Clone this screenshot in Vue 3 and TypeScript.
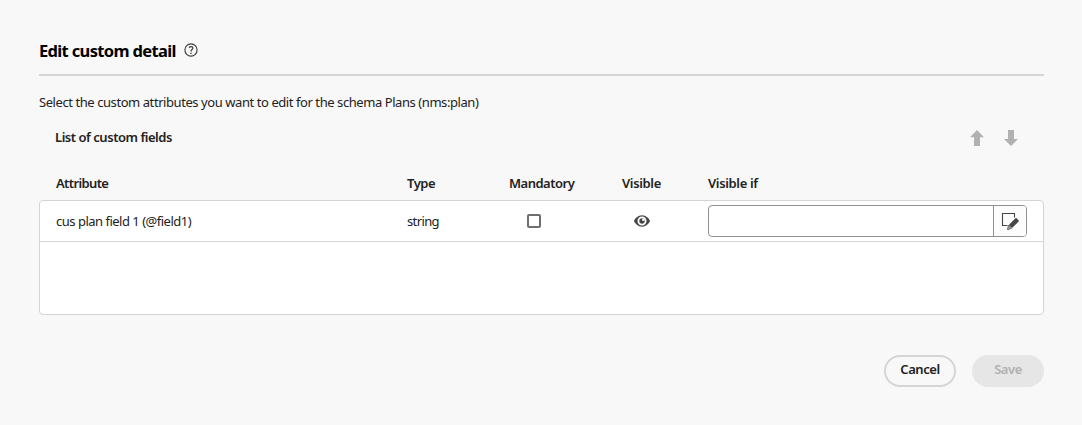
<script setup lang="ts">
import { ref } from 'vue'

interface Field {
  label: string
  type: string
  mandatory: boolean
  visibleIf: string
}

const fields = ref<Field[]>([
  { label: 'cus plan field 1 (@field1)', type: 'string', mandatory: false, visibleIf: '' },
])
</script>

<template>
  <main class="dialog">
    <header class="head">
      <h1>Edit custom detail</h1>
      <svg class="help" viewBox="0 0 14 14" width="14" height="14">
        <circle cx="7" cy="7" r="6.1" fill="none" stroke="#3c3c3c" stroke-width="1.15" />
        <path d="M5.1 4.7C5.7 3.2 8.9 3.2 8.9 5.1C8.9 6.6 7 6.5 7 8.4" fill="none" stroke="#3c3c3c" stroke-width="1.2" />
        <circle cx="7" cy="10.3" r=".8" fill="#3c3c3c" />
      </svg>
    </header>
    <p class="intro">Select the custom attributes you want to edit for the schema Plans (nms:plan)</p>
    <div class="toolbar">
      <h2>List of custom fields</h2>
      <div class="arrows">
        <svg viewBox="0 0 14 16" width="14" height="16"><path d="M7 0L14 7.2H10V16H4V7.2H0Z" fill="#b1b1b1" /></svg>
        <svg viewBox="0 0 14 16" width="14" height="16"><path d="M7 16L0 9H4V0H10V9H14Z" fill="#b1b1b1" /></svg>
      </div>
    </div>
    <div class="row columns">
      <b class="tight">Attribute</b>
      <b>Type</b>
      <b>Mandatory</b>
      <b class="visible">Visible</b>
      <b class="condition-title">Visible if</b>
    </div>
    <section class="table">
      <div v-for="field in fields" :key="field.label" class="row record">
        <span>{{ field.label }}</span>
        <span class="tight">{{ field.type }}</span>
        <input v-model="field.mandatory" class="check" type="checkbox" />
        <svg class="eye" viewBox="0 0 16 12" width="16" height="12">
          <path fill-rule="evenodd" d="M8 .3C4 .3 .9 3.6 0 6C.9 8.4 4 11.7 8 11.7S15.1 8.4 16 6C15.1 3.6 12 .3 8 .3ZM8 1.5A4.5 4.5 0 1 1 8 10.5A4.5 4.5 0 1 1 8 1.5Z" fill="#464646" />
          <circle cx="8" cy="6" r="2.7" fill="#464646" />
          <circle cx="9.3" cy="4.8" r="1.25" fill="#fff" />
        </svg>
        <div class="condition">
          <input v-model="field.visibleIf" type="text" />
          <button type="button" aria-label="Edit condition">
            <svg viewBox="0 0 18 18" width="18" height="18">
              <path d="M6.5 13.5H1.5V1.5H13.5V5.5" fill="none" stroke="#464646" stroke-width="1.1" />
              <path d="M14.4 6.3Q15 5.8 15.6 6.3L17.7 8.4Q18.1 9 17.6 9.6L11 16L7.8 12.9Z" fill="#464646" />
              <path d="M7.5 13.2L10.6 16.3L6.4 17.7Z" fill="#a0a0a0" stroke="#555" stroke-width=".8" />
            </svg>
          </button>
        </div>
      </div>
    </section>
    <footer>
      <button type="button" class="btn cancel">Cancel</button>
      <button type="button" class="btn save" disabled>Save</button>
    </footer>
  </main>
</template>

<style>
body {
  background: #f8f8f8;
}
</style>

<style scoped>
.dialog {
  box-sizing: border-box;
  width: 1082px;
  height: 425px;
  padding: 40px 38px 0 39px;
  background: #f8f8f8;
  color: #222;
  font: 13px/20px "Noto Sans", sans-serif;
  white-space: nowrap;
  overflow: hidden;
}
h1,
h2,
p {
  margin: 0;
}
h1 {
  width: 137px;
  color: #000;
  font-size: 16.5px;
  line-height: 22px;
  font-weight: 700;
  letter-spacing: -0.66px;
}
h2 {
  font-size: 13px;
  line-height: 20px;
  font-weight: 600;
  letter-spacing: -0.47px;
}
b {
  font-weight: 600;
}
.head {
  display: flex;
  gap: 8px;
  height: 34px;
  border-bottom: 2px solid #d5d5d5;
}
.help {
  margin-top: 3px;
}
.intro {
  margin-top: 16px;
  letter-spacing: -0.43px;
}
.toolbar {
  display: flex;
  justify-content: space-between;
  margin-top: 15px;
  padding: 0 26px 0 16px;
}
.arrows {
  display: flex;
  gap: 20px;
  margin-top: 3px;
}
.row {
  display: grid;
  grid-template-columns: 351px 102px 113px 86px 319px;
  align-items: center;
  letter-spacing: -0.5px;
}
.row .tight {
  letter-spacing: -0.62px;
}
.row .visible,
.row .condition-title {
  letter-spacing: -0.35px;
}
.columns {
  height: 20px;
  margin-top: 26px;
  padding-left: 17px;
}
.table {
  box-sizing: border-box;
  height: 115px;
  margin-top: 7px;
  border: 1px solid #d5d5d5;
  border-radius: 4px;
  background: #fff;
}
.record {
  height: 40px;
  padding-left: 16px;
  border-bottom: 1px solid #d5d5d5;
}
.check {
  appearance: none;
  box-sizing: border-box;
  width: 14px;
  height: 14px;
  margin: 0 0 0 18px;
  border: 2px solid #6e6e6e;
  border-radius: 2px;
  background: #fff;
}
.eye {
  margin-left: 12px;
}
.condition {
  box-sizing: border-box;
  display: flex;
  height: 32px;
  border: 1px solid #909090;
  border-radius: 4px;
  background: #fff;
  overflow: hidden;
}
.condition input {
  flex: 1;
  min-width: 0;
  padding: 0 10px;
  border: 0;
  outline: 0;
  background: transparent;
  font: inherit;
}
.condition button {
  display: flex;
  align-items: center;
  justify-content: center;
  box-sizing: border-box;
  width: 33px;
  padding: 0;
  border: 0;
  border-left: 1px solid #909090;
  background: #fcfcfc;
}
footer {
  display: flex;
  justify-content: flex-end;
  gap: 16px;
  margin-top: 40px;
}
.btn {
  box-sizing: border-box;
  width: 72px;
  height: 32px;
  padding: 0 0 4px;
  border: 2px solid #d5d5d5;
  border-radius: 16px;
  background: transparent;
  color: #222;
  font: 600 13px/20px "Noto Sans", sans-serif;
  letter-spacing: -0.45px;
}
.save {
  border-color: #e6e6e6;
  background: #e6e6e6;
  color: #b1b1b1;
}
</style>
